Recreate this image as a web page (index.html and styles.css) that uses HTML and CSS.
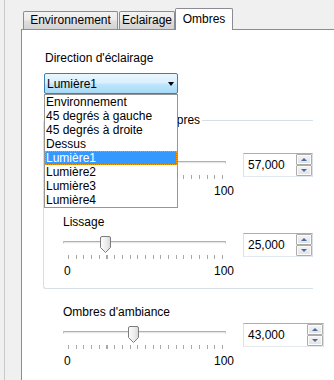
FILE: index.html
```html
<!DOCTYPE html>
<html lang="fr">
<head>
    <meta charset="UTF-8">
    <meta name="viewport" content="width=device-width, initial-scale=1.0">
    <title>Ombres</title>
    <link rel="stylesheet" href="styles.css">
</head>
<body>
<svg class="svg-defs" width="0" height="0">
    <defs>
        <linearGradient id="thumbFill" x1="0" y1="0" x2="1" y2="0">
            <stop offset="0" stop-color="#fdfdfd"/>
            <stop offset="0.6" stop-color="#ececec"/>
            <stop offset="1" stop-color="#d6d6d6"/>
        </linearGradient>
    </defs>
</svg>

<div class="frame">
    <!-- Tab strip -->
    <div class="tabs">
        <div class="tab tab-env">Environnement</div>
        <div class="tab tab-light">Eclairage</div>
        <div class="tab tab-shadow active">Ombres</div>
    </div>

    <div class="panel">
        <div class="field-label">Direction d'éclairage</div>
        <div class="combo">
            <div class="combo-box">
                <span>Lumière1</span>
                <span class="arrow"></span>
            </div>
            <ul class="combo-list">
                <li>Environnement</li>
                <li>45 degrés à gauche</li>
                <li>45 degrés à droite</li>
                <li>Dessus</li>
                <li class="selected">Lumière1</li>
                <li>Lumière2</li>
                <li>Lumière3</li>
                <li>Lumière4</li>
            </ul>
        </div>

        <!-- Own shadows group -->
        <div class="group">
            <span class="group-title">Qualité des ombres propres</span>

            <div class="slider-block">
                <div class="caption">Intensité</div>
                <div class="slider-row">
                    <div class="slider">
                        <div class="track">
                            <div class="groove"></div>
                            <svg class="thumb" style="left: 87px" width="11" height="17" viewBox="0 0 11 17">
                                <path d="M0.5 2 Q0.5 0.5 2 0.5 H9 Q10.5 0.5 10.5 2 V11.5 L5.5 16.5 L0.5 11.5 Z" fill="url(#thumbFill)" stroke="#7d7d7d"/>
                            </svg>
                        </div>
                        <div class="ticks"></div>
                        <div class="scale"><span>0</span><span>100</span></div>
                    </div>
                    <div class="spin">
                        <span class="spin-value">57,000</span>
                        <div class="spin-buttons">
                            <span class="spin-btn"><i class="up"></i></span>
                            <span class="spin-btn"><i class="down"></i></span>
                        </div>
                    </div>
                </div>
            </div>

            <div class="slider-block">
                <div class="caption">Lissage</div>
                <div class="slider-row">
                    <div class="slider">
                        <div class="track">
                            <div class="groove"></div>
                            <svg class="thumb" style="left: 37px" width="11" height="17" viewBox="0 0 11 17">
                                <path d="M0.5 2 Q0.5 0.5 2 0.5 H9 Q10.5 0.5 10.5 2 V11.5 L5.5 16.5 L0.5 11.5 Z" fill="url(#thumbFill)" stroke="#7d7d7d"/>
                            </svg>
                        </div>
                        <div class="ticks"></div>
                        <div class="scale"><span>0</span><span>100</span></div>
                    </div>
                    <div class="spin">
                        <span class="spin-value">25,000</span>
                        <div class="spin-buttons">
                            <span class="spin-btn"><i class="up"></i></span>
                            <span class="spin-btn"><i class="down"></i></span>
                        </div>
                    </div>
                </div>
            </div>
        </div>

        <!-- Ambient shadows -->
        <div class="slider-block outside">
            <div class="caption">Ombres d'ambiance</div>
            <div class="slider-row">
                <div class="slider">
                    <div class="track">
                        <div class="groove"></div>
                        <svg class="thumb" style="left: 65px" width="11" height="17" viewBox="0 0 11 17">
                            <path d="M0.5 2 Q0.5 0.5 2 0.5 H9 Q10.5 0.5 10.5 2 V11.5 L5.5 16.5 L0.5 11.5 Z" fill="url(#thumbFill)" stroke="#7d7d7d"/>
                        </svg>
                    </div>
                    <div class="ticks"></div>
                    <div class="scale"><span>0</span><span>100</span></div>
                </div>
                <div class="spin">
                    <span class="spin-value">43,000</span>
                    <div class="spin-buttons">
                        <span class="spin-btn"><i class="up"></i></span>
                        <span class="spin-btn"><i class="down"></i></span>
                    </div>
                </div>
            </div>
        </div>
    </div>
</div>
</body>
</html>
```

FILE: styles.css
```css
body {
    margin: 0;
    background-color: #f0f0f0;
    font-family: "Liberation Sans", Arial, sans-serif;
    font-size: 12px;
    line-height: 14px;
    color: #000;
    overflow: hidden;
}
.svg-defs {
    position: absolute;
}
.frame {
    box-sizing: border-box;
    width: 330px;
    height: 380px;
    margin-left: 4px;
    border-left: 1px solid #c9c9c9;
    padding-left: 16px;
    overflow: hidden;
}

/* tabs */
.tabs {
    display: flex;
    align-items: flex-end;
    height: 29px;
    padding-left: 2px;
}
.tab {
    box-sizing: border-box;
    height: 18px;
    border: 1px solid #898c95;
    border-bottom: none;
    border-radius: 2px 2px 0 0;
    background: linear-gradient(#f3f3f3, #ebebeb 45%, #dedede 55%, #d3d3d3);
    text-align: center;
    line-height: 17px;
}
.tab-env {
    width: 95px;
    margin-right: 1px;
}
.tab-light {
    width: 56px;
}
.tab-shadow {
    width: 58px;
}
.tab.active {
    position: relative;
    z-index: 1;
    height: 22px;
    margin-bottom: -1px;
    background: #fff;
    line-height: 20px;
}

/* panel */
.panel {
    position: relative;
    box-sizing: border-box;
    width: 313px;
    height: 351px;
    background: #fff;
    border-top: 1px solid #898c95;
    border-left: 1px solid #898c95;
    padding: 21px 0 0 21px;
}
.field-label {
    margin-left: 2px;
}

/* combo box with open list */
.combo {
    position: relative;
    z-index: 2;
    width: 134px;
    margin: 8px 0 0 1px;
}
.combo-box {
    box-sizing: border-box;
    height: 21px;
    display: flex;
    align-items: center;
    justify-content: space-between;
    padding-left: 2px;
    border: 1px solid #3c7fb1;
    border-radius: 2px;
    background: linear-gradient(#eaf6fd, #d9f0fc 45%, #bee6fd 55%, #a7d9f5);
}
.arrow {
    width: 0;
    height: 0;
    margin-right: 3px;
    border-left: 3.5px solid transparent;
    border-right: 3.5px solid transparent;
    border-top: 4px solid #000;
}
.combo-list {
    position: absolute;
    top: 21px;
    left: 0;
    box-sizing: border-box;
    width: 134px;
    margin: 0;
    padding: 0;
    list-style: none;
    background: #fff;
    border: 1px solid #969696;
}
.combo-list li {
    height: 14px;
    padding-left: 1px;
    white-space: nowrap;
}
.combo-list li.selected {
    background: #3399ff;
    color: #fff;
    outline: 1px dotted #ff9900;
    outline-offset: -1px;
}

.group {
    position: relative;
    box-sizing: border-box;
    width: 270px;
    margin-top: 26px;
    padding: 14px 0 10px 19px;
    border: 1px solid #d5dfe5;
    border-right: none;
    border-radius: 3px 0 0 3px;
}
.group-title {
    position: absolute;
    top: -8px;
    left: 6px;
    padding: 0 2px;
    background: #fff;
    white-space: nowrap;
}

/* sliders */
.slider-block + .slider-block {
    margin-top: 17px;
}
.slider-block.outside {
    margin: 16px 0 0 20px;
}
.caption {
    margin-bottom: 4px;
}
.slider-row {
    display: flex;
    align-items: flex-start;
}
.slider {
    width: 163px;
}
.track {
    position: relative;
    height: 20px;
}
.groove {
    position: absolute;
    top: 8px;
    left: 0;
    right: 0;
    box-sizing: border-box;
    height: 3px;
    background: #e6e6e6;
    border-top: 1px solid #b0b0b0;
    border-bottom: 1px solid #fbfbfb;
    border-left: 1px solid #c8c8c8;
    border-right: 1px solid #c8c8c8;
}
.thumb {
    position: absolute;
    top: 3px;
    display: block;
}
.ticks {
    width: 155px;
    height: 4px;
    margin: 2px 0 0 5px;
    background: repeating-linear-gradient(to right, #a8a8a8 0 1px, transparent 1px 7.7px);
}
.scale {
    display: flex;
    justify-content: space-between;
    width: 170px;
    margin-top: 5px;
    padding-left: 1px;
}

/* spin box */
.spin {
    box-sizing: border-box;
    display: flex;
    width: 81px;
    height: 24px;
    margin-left: 17px;
    border: 1px solid #dbdfe6;
    border-top-color: #abadb3;
    border-bottom-color: #e3e9ef;
    background: #fff;
}
.spin-value {
    flex: 1;
    padding-left: 4px;
    line-height: 22px;
}
.spin-buttons {
    display: flex;
    flex-direction: column;
    width: 16px;
}
.spin-btn {
    box-sizing: border-box;
    height: 11px;
    display: flex;
    align-items: center;
    justify-content: center;
    border: 1px solid #acacac;
    border-radius: 1px;
    background: linear-gradient(#f4f4f4, #e2e2e2);
    box-shadow: inset 0 0 0 1px #fcfcfc;
}
.spin-btn i {
    width: 0;
    height: 0;
    border-left: 3px solid transparent;
    border-right: 3px solid transparent;
}
.spin-btn .up {
    border-bottom: 3px solid #4a69a8;
}
.spin-btn .down {
    border-top: 3px solid #4a69a8;
}
```
